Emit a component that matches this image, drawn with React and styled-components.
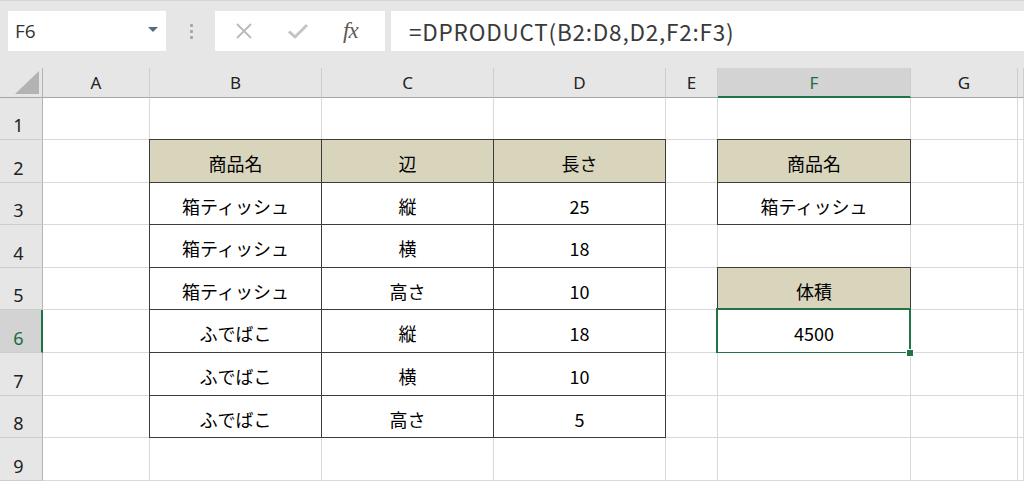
import React from "react";
import styled, { createGlobalStyle, css } from "styled-components";

const Global = createGlobalStyle`
  html, body { margin: 0; padding: 0; background: #fff; overflow: hidden; }
  * { box-sizing: border-box; }
`;

const Page = styled.div`
  width: 1024px;
  height: 481px;
  overflow: hidden;
  display: flex;
  flex-direction: column;
  font-family: "Noto Sans CJK JP", "Noto Sans", sans-serif;
`;

const Toolbar = styled.div`
  height: 68px;
  flex: none;
  background: #e6e6e6;
  border-top: 1px solid #d6d6d6;
  display: flex;
  align-items: flex-start;
  padding: 10px 0 0 8px;
`;

const NameBox = styled.div`
  width: 158px;
  height: 40px;
  background: #fff;
  display: flex;
  align-items: center;
  justify-content: space-between;
  padding: 0 8px 0 7px;
  font-family: "Open Sans", "Noto Sans", sans-serif;
  font-size: 19px;
  color: #333;
`;

const Caret = styled.span`
  width: 0;
  height: 0;
  border-left: 5px solid transparent;
  border-right: 5px solid transparent;
  border-top: 5px solid #5b6b78;
  margin-top: -3px;
`;

const Grip = styled.div`
  width: 49px;
  height: 40px;
  display: flex;
  flex-direction: column;
  align-items: center;
  justify-content: center;
  gap: 3px;
  padding-left: 1px;
`;

const Dot = styled.span`
  width: 3px;
  height: 3px;
  border-radius: 1px;
  background: #a6a6a6;
`;

const FxBox = styled.div`
  width: 170px;
  height: 40px;
  background: #fff;
  display: flex;
  align-items: center;
  padding-left: 20px;
`;

const IconSlot = styled.span`
  display: flex;
  align-items: center;
  margin-left: ${(p) => p.$gap || 0}px;
`;

const FxLabel = styled.span`
  font-family: "Liberation Serif", "DejaVu Serif", serif;
  font-style: italic;
  font-size: 23px;
  color: #5e5a55;
  margin-left: 34px;
  letter-spacing: -1px;
`;

const FormulaBox = styled.div`
  flex: 1;
  height: 40px;
  margin-left: 6px;
  background: #fff;
  display: flex;
  align-items: center;
  padding-left: 18px;
  font-family: "Noto Sans CJK JP", "Noto Sans", sans-serif;
  font-size: 22.5px;
  letter-spacing: 0.8px;
  color: #3a3a3a;
`;

const Sheet = styled.div`
  display: grid;
  grid-template-columns: 43px 107px 172px 172px 172px 52px 193px 107px 1fr;
  grid-template-rows: 30px 42px 43px 42px 43px 42px 43px 43px 42px 43px;
`;

const Corner = styled.div`
  background: #e6e6e6;
  border-right: 1px solid #b4b4b4;
  border-bottom: 1px solid #a6a6a6;
  position: relative;
  &::after {
    content: "";
    position: absolute;
    right: 3px;
    bottom: 3px;
    width: 0;
    height: 0;
    border-left: 24px solid transparent;
    border-bottom: 23px solid #b3b3b3;
  }
`;

const ColHead = styled.div`
  background: ${(p) => (p.$active ? "#d3d3d3" : "#e6e6e6")};
  border-right: 1px solid #cdcdcd;
  border-bottom: ${(p) => (p.$active ? "2px solid #217346" : "1px solid #a6a6a6")};
  color: ${(p) => (p.$active ? "#1d6b40" : "#222")};
  display: flex;
  align-items: center;
  justify-content: center;
  font-family: "Noto Sans", "Open Sans", sans-serif;
  font-size: 17px;
  padding-top: ${(p) => (p.$active ? "1px" : "0")};
`;

const RowHead = styled.div`
  background: ${(p) => (p.$active ? "#d3d3d3" : "#e6e6e6")};
  border-right: ${(p) => (p.$active ? "2px solid #217346" : "1px solid #b4b4b4")};
  border-bottom: 1px solid #cdcdcd;
  color: ${(p) => (p.$active ? "#1d6b40" : "#222")};
  display: flex;
  align-items: flex-end;
  justify-content: center;
  padding-bottom: 2px;
  padding-right: ${(p) => (p.$active ? "4px" : "5px")};
  font-family: "Noto Sans", "Open Sans", sans-serif;
  font-size: 18px;
`;

const Cell = styled.div`
  position: relative;
  border-right: 1px solid #d9d9d9;
  border-bottom: 1px solid #d9d9d9;
  display: flex;
  align-items: center;
  justify-content: center;
  padding-top: 4px;
  font-family: "Noto Sans CJK JP", "Noto Sans", sans-serif;
  font-size: 18px;
  font-weight: 400;
  color: #000;
  background: ${(p) => (p.$head ? "#d9d5bd" : "#fff")};
  ${(p) =>
    p.$boxed &&
    css`
      &::before {
        content: "";
        position: absolute;
        top: -1px;
        left: -1px;
        right: -1px;
        bottom: -1px;
        border: 1px solid #3c3c3c;
        pointer-events: none;
      }
    `}
  ${(p) =>
    p.$selected &&
    css`
      &::after {
        content: "";
        position: absolute;
        top: -2px;
        left: -2px;
        right: -1px;
        bottom: -2px;
        border: 2px solid #217346;
        pointer-events: none;
      }
    `}
`;

const Handle = styled.span`
  position: absolute;
  right: -4px;
  bottom: -5px;
  width: 8px;
  height: 8px;
  background: #217346;
  border: 1px solid #fff;
  z-index: 3;
`;

const cols = ["A", "B", "C", "D", "E", "F", "G", ""];

const table = {
  2: { B: ["商品名", "h"], C: ["辺", "h"], D: ["長さ", "h"], F: ["商品名", "h"] },
  3: { B: ["箱ティッシュ"], C: ["縦"], D: ["25"], F: ["箱ティッシュ"] },
  4: { B: ["箱ティッシュ"], C: ["横"], D: ["18"] },
  5: { B: ["箱ティッシュ"], C: ["高さ"], D: ["10"], F: ["体積", "h"] },
  6: { B: ["ふでばこ"], C: ["縦"], D: ["18"], F: ["4500", "s"] },
  7: { B: ["ふでばこ"], C: ["横"], D: ["10"] },
  8: { B: ["ふでばこ"], C: ["高さ"], D: ["5"] },
};

const XIcon = () => (
  <svg width="18" height="18" viewBox="0 0 18 18">
    <path d="M2 2L16 16M16 2L2 16" stroke="#b9b9b9" strokeWidth="1.8" fill="none" />
  </svg>
);

const CheckIcon = () => (
  <svg width="22" height="18" viewBox="0 0 22 18">
    <path d="M2 9.5L8 15L20 3" stroke="#c4c4c4" strokeWidth="3" fill="none" strokeLinejoin="round" />
  </svg>
);

export default function App() {
  const rows = [1, 2, 3, 4, 5, 6, 7, 8, 9];
  return (
    <Page>
      <Global />
      <Toolbar>
        <NameBox>
          <span>F6</span>
          <Caret />
        </NameBox>
        <Grip>
          <Dot />
          <Dot />
          <Dot />
        </Grip>
        <FxBox>
          <IconSlot>
            <XIcon />
          </IconSlot>
          <IconSlot $gap={34}>
            <CheckIcon />
          </IconSlot>
          <FxLabel>fx</FxLabel>
        </FxBox>
        <FormulaBox>=DPRODUCT(B2:D8,D2,F2:F3)</FormulaBox>
      </Toolbar>
      <Sheet>
        <Corner />
        {cols.map((c, i) => (
          <ColHead key={"h" + i} $active={c === "F"}>
            {c}
          </ColHead>
        ))}
        {rows.map((r) => (
          <React.Fragment key={r}>
            <RowHead $active={r === 6}>{r}</RowHead>
            {cols.map((c, i) => {
              const d = table[r] && table[r][c];
              return (
                <Cell
                  key={r + "-" + i}
                  $head={d && d[1] === "h"}
                  $boxed={!!d}
                  $selected={d && d[1] === "s"}
                >
                  {d ? d[0] : null}
                  {d && d[1] === "s" ? <Handle /> : null}
                </Cell>
              );
            })}
          </React.Fragment>
        ))}
      </Sheet>
    </Page>
  );
}
